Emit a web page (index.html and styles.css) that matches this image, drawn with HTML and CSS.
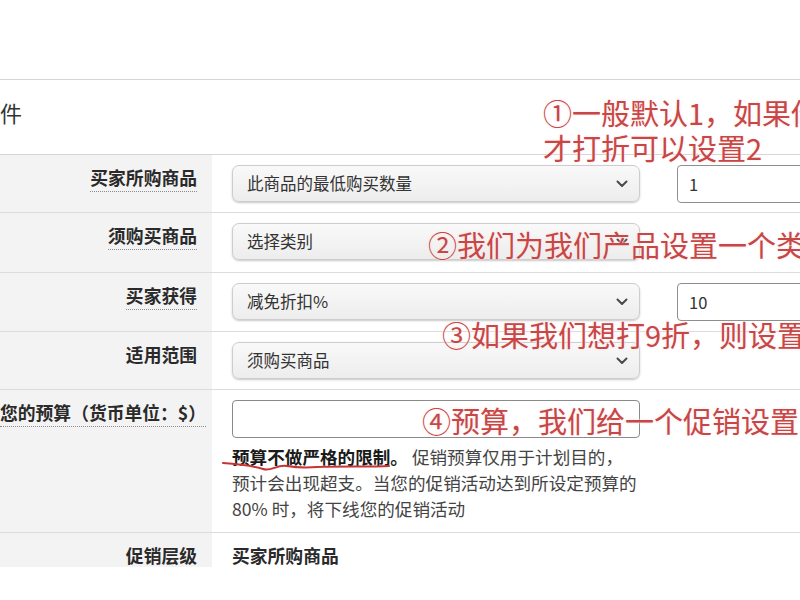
FILE: index.html
```html
<!DOCTYPE html>
<html lang="zh">
<head>
<meta charset="utf-8">
<title>促销条件</title>
<link rel="stylesheet" href="styles.css">
</head>
<body>
<div class="page">
  <div class="top"></div>
  <div class="head"><span class="head-text">促销条件</span></div>

  <div class="row r1">
    <div class="lab"><span class="tip">买家所购商品</span></div>
    <div class="val">
      <div class="sel">此商品的最低购买数量<svg class="chev" viewBox="0 0 12 8" width="12" height="8"><path d="M1.5 1.5 L6 6 L10.5 1.5"/></svg></div>
      <div class="num">1</div>
    </div>
  </div>

  <div class="row r2">
    <div class="lab"><span class="tip">须购买商品</span></div>
    <div class="val">
      <div class="sel">选择类别<svg class="chev" viewBox="0 0 12 8" width="12" height="8"><path d="M1.5 1.5 L6 6 L10.5 1.5"/></svg></div>
    </div>
  </div>

  <div class="row r3">
    <div class="lab"><span class="tip">买家获得</span></div>
    <div class="val">
      <div class="sel">减免折扣%<svg class="chev" viewBox="0 0 12 8" width="12" height="8"><path d="M1.5 1.5 L6 6 L10.5 1.5"/></svg></div>
      <div class="num">10</div>
    </div>
  </div>

  <div class="row r4">
    <div class="lab"><span class="plain">适用范围</span></div>
    <div class="val">
      <div class="sel">须购买商品<svg class="chev" viewBox="0 0 12 8" width="12" height="8"><path d="M1.5 1.5 L6 6 L10.5 1.5"/></svg></div>
    </div>
  </div>

  <div class="row r5">
    <div class="lab"><span class="tip">您的预算（货币单位：$）</span></div>
    <div class="val col">
      <div class="budget"></div>
      <p class="help"><b>预算不做严格的限制。</b> 促销预算仅用于计划目的，<br>预计会出现超支。当您的促销活动达到所设定预算的<br>80% 时，将下线您的促销活动</p>
    </div>
  </div>

  <div class="row r6">
    <div class="lab"><span class="plain">促销层级</span></div>
    <div class="val"><span class="strong">买家所购商品</span></div>
  </div>

  <div class="annot a1">①一般默认1，如果你<br>才打折可以设置2</div>
  <div class="annot a2">②我们为我们产品设置一个类别</div>
  <div class="annot a3">③如果我们想打9折，则设置</div>
  <div class="annot a4">④预算，我们给一个促销设置</div>

  <svg class="squiggle" viewBox="0 0 180 16" width="180" height="16">
    <path d="M2 5 C18 6 32 8 42 11 C50 14 56 6 66 8 C78 10 84 10 96 9 C120 8 150 9 168 8"/>
  </svg>
</div>
</body>
</html>
```

FILE: styles.css
```css
html, body {
  margin: 0;
  padding: 0;
  background: #ffffff;
}

body {
  width: 800px;
  height: 600px;
  overflow: hidden;
  font-family: "Noto Sans CJK SC", "Noto Sans", "DejaVu Sans", sans-serif;
  color: #333;
}

.page {
  position: relative;
  width: 800px;
  height: 600px;
  overflow: hidden;
}

.top {
  height: 79px;
}

.head {
  border-top: 1px solid #d6d6d6;
  border-bottom: 1px solid #d6d6d6;
  height: 76px;
  box-sizing: border-box;
  padding-top: 19px;
  font-size: 22px;
  line-height: 26px;
  color: #333;
  white-space: nowrap;
}

.head-text {
  display: inline-block;
  margin-left: -66px;
}

.row {
  display: grid;
  grid-template-columns: 212px 1fr;
  border-bottom: 1px solid #dcdcdc;
  box-sizing: border-box;
}

.r1 { height: 58px; }
.r2 { height: 60px; }
.r3 { height: 59px; }
.r4 { height: 58px; }
.r5 { height: 143px; }
.r6 { height: 31px; border-bottom: none; }

.lab {
  background: #f3f3f3;
  text-align: right;
  padding: 10px 15px 0 0;
  white-space: nowrap;
  font-size: 17.8px;
  line-height: 24px;
  font-weight: 700;
  color: #2a2a2a;
}

.tip {
  border-bottom: 1px dotted #8c8c8c;
  padding-bottom: 1px;
}

.val {
  display: flex;
  align-items: flex-start;
  gap: 37px;
  padding: 10px 0 0 20px;
  white-space: nowrap;
}

.val.col {
  flex-direction: column;
  gap: 0;
}

.sel {
  position: relative;
  flex: none;
  width: 408px;
  height: 37px;
  box-sizing: border-box;
  border: 1px solid #cdcdcd;
  border-radius: 7px;
  background: linear-gradient(#f9f9f9, #ededed);
  box-shadow: 0 1px 2px rgba(0, 0, 0, 0.22);
  padding-left: 14px;
  font-size: 16.5px;
  line-height: 35px;
  color: #333;
}

.chev {
  position: absolute;
  right: 11px;
  top: 14px;
}

.chev path {
  fill: none;
  stroke: #4a4a4a;
  stroke-width: 2;
  stroke-linecap: round;
  stroke-linejoin: round;
}

.num {
  flex: none;
  width: 200px;
  height: 38px;
  box-sizing: border-box;
  border: 1px solid #8e8e8e;
  border-radius: 4px;
  background: #fff;
  padding-left: 11px;
  font-size: 16.5px;
  line-height: 36px;
  color: #333;
}

.budget {
  width: 408px;
  height: 38px;
  box-sizing: border-box;
  border: 1px solid #8a8a8a;
  border-radius: 4px;
  background: #fff;
}

.help {
  margin: 6px 0 0 0;
  font-size: 17.6px;
  line-height: 26px;
  color: #444;
}

.help b {
  color: #1a1a1a;
  font-weight: 700;
}

.strong {
  font-size: 17.8px;
  line-height: 24px;
  font-weight: 700;
  color: #2a2a2a;
}

.r6 .val {
  padding-top: 10px;
}

.annot {
  position: absolute;
  white-space: nowrap;
  font-size: 29px;
  line-height: 37px;
  color: #c74646;
  text-shadow: 0 0 3px rgba(255, 225, 225, 0.95), 0 0 1px #fff;
}

.a1 { left: 543px; top: 95px; line-height: 35px; }
.a2 { left: 428px; top: 226px; }
.a3 { left: 442px; top: 316px; }
.a4 { left: 422px; top: 402px; }

.squiggle {
  position: absolute;
  left: 221px;
  top: 458px;
}

.squiggle path {
  fill: none;
  stroke: #c83434;
  stroke-width: 2;
  stroke-linecap: round;
}
```
